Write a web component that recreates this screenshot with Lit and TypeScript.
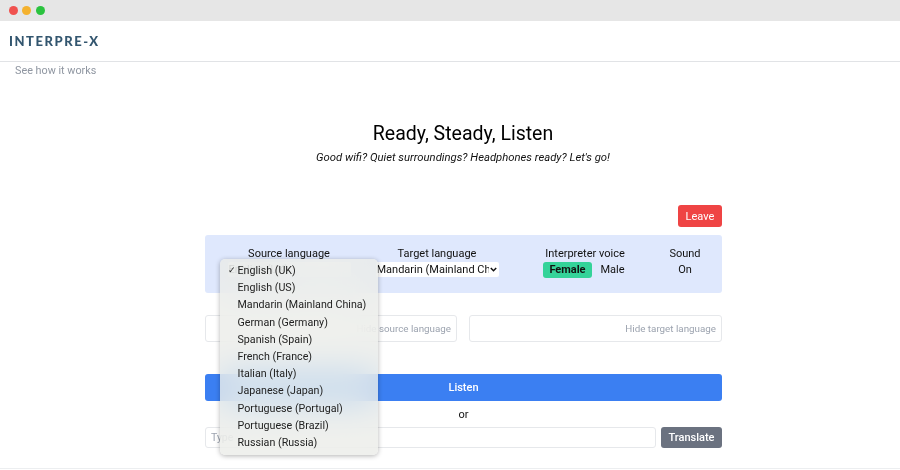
import { LitElement, html, css } from "lit";
import { customElement } from "lit/decorators.js";

const LANGS = [
  "English (UK)", "English (US)", "Mandarin (Mainland China)", "German (Germany)",
  "Spanish (Spain)", "French (France)", "Italian (Italy)", "Japanese (Japan)",
  "Portuguese (Portugal)", "Portuguese (Brazil)", "Russian (Russia)",
];

@customElement("app-root")
export class AppRoot extends LitElement {
  static styles = css`
    :host { display: block; width: 900px; height: 470px; overflow: hidden; position: relative; background: #fff;
      font-family: Roboto, "Liberation Sans", sans-serif; font-size: 11px; color: #111; }
    * { box-sizing: border-box; }
    .titlebar { height: 21px; background: #e6e6e6; display: flex; align-items: center; gap: 4.5px; padding: 0 0 0 8.5px; }
    .dot { width: 9px; height: 9px; border-radius: 50%; }
    .red { background: #f0524f; } .yellow { background: #f4b22f; } .green { background: #2bc33f; }
    .nav { height: 41px; border-bottom: 1px solid #e1e3e6; display: flex; align-items: center; padding: 0 0 0 9px; }
    .brand { font-family: Lato, sans-serif; font-weight: 900; font-size: 13px; letter-spacing: 1.55px; color: #33566f; }
    .how { padding: 2px 0 0 15px; height: 17px; line-height: 14px; font-size: 10.8px; color: #8f96a1; }
    .hero { text-align: center; margin: 41px 0 0 26px; }
    h1 { margin: 0; font-weight: 400; font-size: 19.5px; line-height: 28px; color: #000; }
    .tag { margin: 2px 0 0; font-style: italic; font-size: 11.3px; line-height: 16px; }
    .main { width: 517px; margin: 39px 0 0 205px; }
    .leave-row { display: flex; justify-content: flex-end; }
    button { border: 0; font-family: inherit; color: #fff; font-size: 11px; border-radius: 3px; padding: 0; }
    .leave { width: 44px; height: 22px; background: #ef4444; }
    .panel { margin-top: 8px; height: 58px; background: #dfe8fd; border-radius: 3px; display: grid;
      grid-template-columns: 168px 128px 168px 32px; padding-top: 11px; line-height: 16px; text-align: center; }
    .col { display: flex; flex-direction: column; align-items: center; }
    .sel { position: relative; width: 123px; height: 15px; }
    select { appearance: none; -webkit-appearance: none; display: block; width: 100%; height: 15px; font-family: inherit; font-size: 11px;
      padding: 0 10px 0 1px; border: 0; background: #fff; color: #111; border-radius: 2px; }
    .chev { position: absolute; right: 2px; top: 5px; width: 7px; height: 5px; pointer-events: none; }
    .voice { display: flex; gap: 9px; align-items: center; margin-left: -2px; }
    .pill { padding: 0 6px; border-radius: 3px; height: 16px; line-height: 16px; }
    .on { background: #34d399; font-weight: 700; }
    .inputs { margin-top: 22px; display: grid; grid-template-columns: 252px 253px; gap: 12px; }
    .field { height: 27px; border: 1px solid #e6e8eb; border-radius: 3px; font-size: 9.8px; color: #9ca3af;
      display: flex; align-items: center; justify-content: flex-end; padding-right: 5px; background: #fff; white-space: nowrap; }
    .listen { display: block; width: 100%; height: 27px; margin-top: 32px; background: #3b7ff2; font-weight: 500; }
    .or { text-align: center; line-height: 16px; margin-top: 6px; }
    .row { display: flex; gap: 5px; margin-top: 4px; }
    .type { flex: 1; height: 21px; border: 1px solid #e6e8eb; border-radius: 3px; font-size: 10.5px; color: #9ca3af; display: flex; align-items: center; padding-left: 5px; }
    .translate { width: 61px; height: 21px; background: #6b7280; font-weight: 500; }
    .foot { position: absolute; left: 0; right: 0; bottom: 1px; height: 1px; background: #eceef0; }
    .menu { position: absolute; left: 220px; top: 259px; width: 158px; height: 196px; border-radius: 5px; padding: 3px 0 0;
      background: rgba(234,236,232,.78); backdrop-filter: blur(18px) saturate(1.5); box-shadow: 0 1px 5px rgba(0,0,0,.3);
      font-size: 10.7px; color: #222; }
    .opt { height: 17.2px; line-height: 17.2px; padding-left: 17.5px; position: relative; white-space: nowrap; }
    .check { position: absolute; left: 8px; top: 0; font-size: 9px; }
  `;

  render() {
    const chev = html`<svg class="chev" viewBox="0 0 7 5"><path d="M.8 1l2.7 2.7L6.2 1" fill="none" stroke="#111" stroke-width="1.5"/></svg>`;
    return html`
      <div class="titlebar"><span class="dot red"></span><span class="dot yellow"></span><span class="dot green"></span></div>
      <header class="nav"><span class="brand">INTERPRE-X</span></header>
      <div class="how">See how it works</div>
      <section class="hero">
        <h1>Ready, Steady, Listen</h1>
        <p class="tag">Good wifi? Quiet surroundings? Headphones ready? Let's go!</p>
      </section>
      <main class="main">
        <div class="leave-row"><button class="leave">Leave</button></div>
        <div class="panel">
          <div class="col"><span>Source language</span>
            <div class="sel"><select><option>English (UK)</option></select></div></div>
          <div class="col"><span>Target language</span>
            <div class="sel"><select><option>Mandarin (Mainland China)</option></select>${chev}</div></div>
          <div class="col"><span>Interpreter voice</span>
            <div class="voice"><span class="pill on">Female</span><span>Male</span></div></div>
          <div class="col"><span>Sound</span><span>On</span></div>
        </div>
        <div class="inputs">
          <div class="field">Hide source language</div>
          <div class="field">Hide target language</div>
        </div>
        <button class="listen">Listen</button>
        <div class="or">or</div>
        <div class="row"><div class="type">Type</div><button class="translate">Translate</button></div>
      </main>
      <div class="foot"></div>
      <div class="menu">
        ${LANGS.map((l, i) => html`<div class="opt">${i === 0 ? html`<span class="check">✓</span>` : ""}${l}</div>`)}
      </div>
    `;
  }
}
